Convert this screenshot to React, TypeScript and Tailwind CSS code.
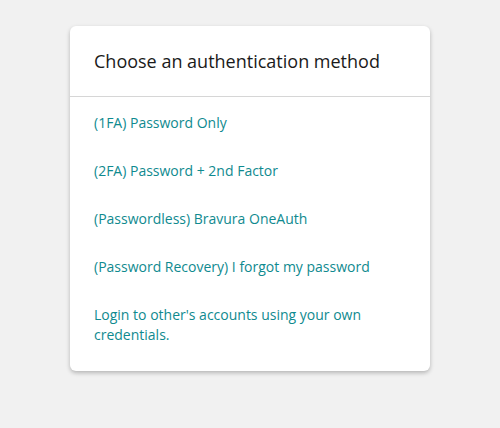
const methods = [
  "(1FA) Password Only",
  "(2FA) Password + 2nd Factor",
  "(Passwordless) Bravura OneAuth",
  "(Password Recovery) I forgot my password",
  "Login to other's accounts using your own credentials.",
];

export default function App() {
  return (
    <div
      className="min-h-[428px] w-full bg-[#f1f1f1] pt-[26px]"
      style={{ fontFamily: '"Open Sans", "Liberation Sans", sans-serif' }}
    >
      <div className="mx-auto w-[360px] rounded-md bg-white shadow-[0_2px_4px_rgba(0,0,0,0.25)]">
        <div className="border-b border-[#d6d6d6] px-6 pt-6 pb-6">
          <h1 className="text-[18px] leading-[22px] text-[#1a1a1a]">
            Choose an authentication method
          </h1>
        </div>
        <div className="flex flex-col gap-7 px-6 pt-4 pb-[26px]">
          {methods.map((m) => (
            <a
              key={m}
              href="#"
              className="text-[14px] leading-5 text-[#0f8a8f] pr-6"
            >
              {m}
            </a>
          ))}
        </div>
      </div>
    </div>
  );
}
